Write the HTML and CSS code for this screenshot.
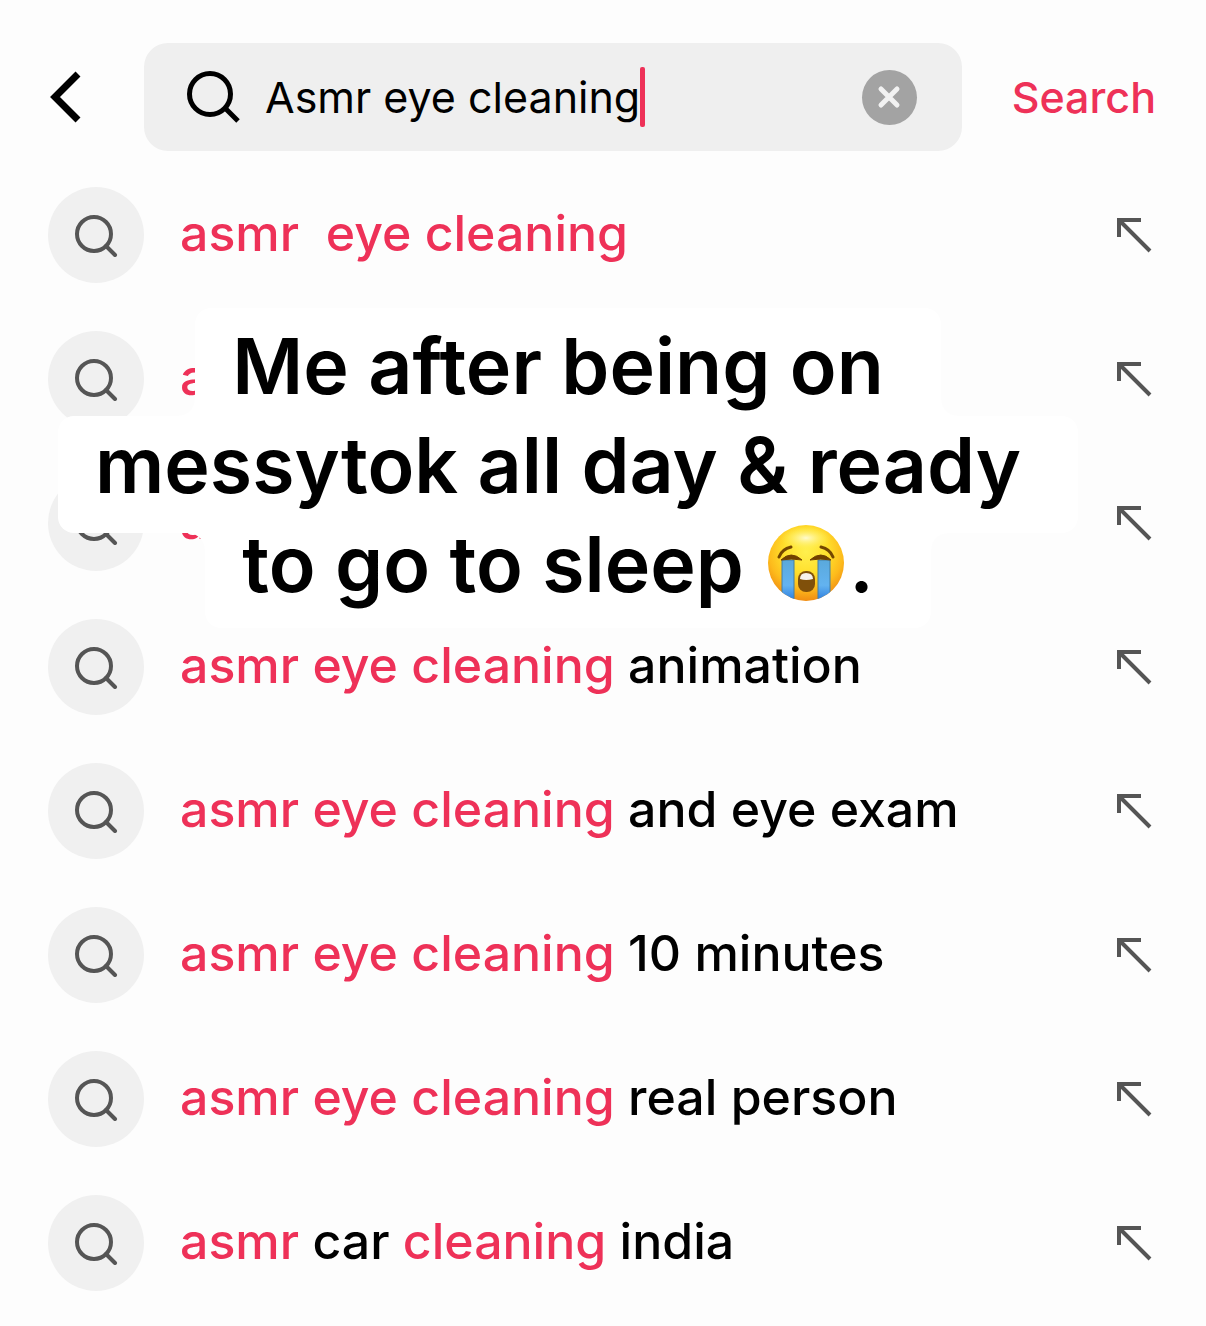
FILE: index.html
```html
<!DOCTYPE html>
<html lang="en">
<head>
    <meta charset="UTF-8">
    <meta name="viewport" content="width=device-width, initial-scale=1.0">
    <title>Search</title>
    <link rel="stylesheet" href="styles.css">
</head>
<body>
    <svg class="sprite" aria-hidden="true">
        <symbol id="icon-search" viewBox="0 0 44 44">
            <circle cx="20" cy="21" r="17" />
            <path d="M32 33 L41 42" stroke-linecap="round" />
        </symbol>
        <symbol id="icon-fill" viewBox="0 0 36 36">
            <path d="M3 20 V3 H25 M3 3 L34 34" />
        </symbol>
    </svg>

    <form class="search-bar" autocomplete="off">
        <button type="button" class="back" aria-label="Back">
            <svg viewBox="0 0 32 54"><path d="M28 4 L5 27 L28 50" /></svg>
        </button>
        <div class="field">
            <svg class="field-icon" viewBox="0 0 54 54"><circle cx="23" cy="24" r="20.5" /><path d="M38 38 L51 51" /></svg>
            <input type="text" id="query" class="query" aria-label="Search" value="Asmr eye cleaning">
            <span class="caret"></span>
            <button type="button" class="clear" aria-label="Clear">
                <svg viewBox="0 0 24 24"><path d="M4 4 L20 20 M20 4 L4 20" /></svg>
            </button>
        </div>
        <button type="submit" class="submit">Search</button>
    </form>

    <main class="results">
        <ul class="suggestions">
            <li class="suggestion">
                <span class="badge"><svg><use href="#icon-search" /></svg></span>
                <a href="#" class="term"><mark>asmr&nbsp; eye cleaning</mark></a>
                <button type="button" class="fill" aria-label="Use suggestion"><svg><use href="#icon-fill" /></svg></button>
            </li>
            <li class="suggestion">
                <span class="badge"><svg><use href="#icon-search" /></svg></span>
                <a href="#" class="term"><mark>asmr</mark></a>
                <button type="button" class="fill" aria-label="Use suggestion"><svg><use href="#icon-fill" /></svg></button>
            </li>
            <li class="suggestion">
                <span class="badge"><svg><use href="#icon-search" /></svg></span>
                <a href="#" class="term"><mark>asmr</mark></a>
                <button type="button" class="fill" aria-label="Use suggestion"><svg><use href="#icon-fill" /></svg></button>
            </li>
            <li class="suggestion">
                <span class="badge"><svg><use href="#icon-search" /></svg></span>
                <a href="#" class="term"><mark>asmr eye cleaning</mark> animation</a>
                <button type="button" class="fill" aria-label="Use suggestion"><svg><use href="#icon-fill" /></svg></button>
            </li>
            <li class="suggestion">
                <span class="badge"><svg><use href="#icon-search" /></svg></span>
                <a href="#" class="term"><mark>asmr eye cleaning</mark> and eye exam</a>
                <button type="button" class="fill" aria-label="Use suggestion"><svg><use href="#icon-fill" /></svg></button>
            </li>
            <li class="suggestion">
                <span class="badge"><svg><use href="#icon-search" /></svg></span>
                <a href="#" class="term"><mark>asmr eye cleaning</mark> 10 minutes</a>
                <button type="button" class="fill" aria-label="Use suggestion"><svg><use href="#icon-fill" /></svg></button>
            </li>
            <li class="suggestion">
                <span class="badge"><svg><use href="#icon-search" /></svg></span>
                <a href="#" class="term"><mark>asmr eye cleaning</mark> real person</a>
                <button type="button" class="fill" aria-label="Use suggestion"><svg><use href="#icon-fill" /></svg></button>
            </li>
            <li class="suggestion">
                <span class="badge"><svg><use href="#icon-search" /></svg></span>
                <a href="#" class="term"><mark>asmr</mark> car <mark>cleaning</mark> india</a>
                <button type="button" class="fill" aria-label="Use suggestion"><svg><use href="#icon-fill" /></svg></button>
            </li>
        </ul>

        <p class="caption">
            <span class="line line-first">Me after being on</span>
            <span class="line line-middle">messytok all day &amp; ready</span>
            <span class="line line-last">to go to sleep
                <svg class="emoji" viewBox="0 0 78 78" role="img" aria-label="Loudly crying face">
                    <defs>
                        <radialGradient id="face" cx="0.5" cy="0.35" r="0.65">
                            <stop offset="0" stop-color="#fff04e" />
                            <stop offset="0.45" stop-color="#ffdf2c" />
                            <stop offset="0.75" stop-color="#fdbb1c" />
                            <stop offset="1" stop-color="#f08c12" />
                        </radialGradient>
                        <radialGradient id="shine">
                            <stop offset="0" stop-color="#fffbd0" />
                            <stop offset="1" stop-color="#fff04e" stop-opacity="0" />
                        </radialGradient>
                        <linearGradient id="tears" x1="0" y1="0" x2="0" y2="1">
                            <stop offset="0" stop-color="#5aa9dc" />
                            <stop offset="0.6" stop-color="#63b3f0" />
                            <stop offset="1" stop-color="#2878dc" />
                        </linearGradient>
                        <clipPath id="face-clip"><circle cx="39" cy="39" r="38" /></clipPath>
                    </defs>
                    <circle cx="39" cy="39" r="38" fill="url(#face)" />
                    <ellipse cx="39" cy="14" rx="26" ry="12" fill="url(#shine)" />
                    <g clip-path="url(#face-clip)">
                        <path d="M15 36 H27 V78 H15 Z M51 36 H63 V78 H51 Z" fill="url(#tears)" stroke="#477fa0" stroke-width="1" />
                    </g>
                    <path d="M12 33 Q15 25 24 23 M54 23 Q63 25 66 33" fill="none" stroke="#744600" stroke-width="3" stroke-linecap="round" />
                    <path d="M14 36 Q24 26 35 36 Q24 34 14 36 Z M43 36 Q54 26 64 36 Q54 34 43 36 Z" fill="#704000" stroke="#704000" stroke-width="1" stroke-linejoin="round" />
                    <rect x="31" y="47" width="17" height="21" rx="8" fill="#80500a" />
                    <path d="M33 55 Q33 49 39 49 Q46 49 46 55 Q39 57 33 55 Z" fill="#f6f2ec" />
                </svg>.</span>
        </p>
    </main>
</body>
</html>
```

FILE: styles.css
```css
* {
    box-sizing: border-box;
}
body {
    min-height: 100vh;
    margin: 0;
    background: #fdfdfd;
    color: #000;
    font-family: Inter, 'Liberation Sans', sans-serif;
}
button {
    display: flex;
    align-items: center;
    justify-content: center;
    flex: none;
    padding: 0;
    border: none;
    background: none;
    font-family: inherit;
    cursor: pointer;
}
svg {
    display: block;
    fill: none;
    stroke: currentColor;
}
.sprite {
    position: absolute;
    width: 0;
    height: 0;
}

/* search bar */
.search-bar {
    display: flex;
    align-items: center;
    padding: 43px 50px 0 50px;
}
.back svg {
    width: 32px;
    height: 54px;
    stroke-width: 7px;
}
.field {
    display: flex;
    align-items: center;
    flex: 1;
    min-width: 0;
    height: 108px;
    margin: 0 50px 0 62px;
    padding: 0 45px 0 43px;
    border-radius: 24px;
    background: #efefef;
}
.field-icon {
    flex: none;
    width: 54px;
    height: 54px;
    margin-right: 24px;
    stroke-width: 5px;
}
.query {
    field-sizing: content;
    min-width: 0;
    padding: 0;
    border: none;
    outline: none;
    background: none;
    color: #000;
    font-family: inherit;
    font-size: 43px;
}
.caret {
    flex: none;
    width: 5px;
    height: 60px;
    border-radius: 2px;
    background: #ee3158;
}
.clear {
    width: 55px;
    height: 55px;
    margin-left: auto;
    border-radius: 50%;
    background: #a3a3a3;
    color: #f2f2f2;
}
.clear svg {
    width: 24px;
    height: 24px;
    stroke-width: 5px;
    stroke-linecap: round;
}
.submit {
    color: #ee3158;
    font-size: 43px;
    font-weight: 500;
}

/* suggestions */
.results {
    position: relative;
    padding-top: 36px;
}
.suggestions {
    display: flex;
    flex-direction: column;
    gap: 48px;
    margin: 0;
    padding: 0 54px 36px 48px;
    list-style: none;
}
.suggestion {
    display: flex;
    align-items: center;
    gap: 36px;
}
.badge {
    display: flex;
    align-items: center;
    justify-content: center;
    flex: none;
    width: 96px;
    height: 96px;
    border-radius: 50%;
    background: #f0f0f0;
    color: #555;
}
.badge svg {
    width: 44px;
    height: 44px;
    stroke-width: 4px;
}
.term {
    flex: 1;
    min-width: 0;
    padding-bottom: 4px;
    color: #000;
    font-size: 50px;
    font-weight: 500;
    line-height: 60px;
    text-decoration: none;
    white-space: nowrap;
}
.term mark {
    background: none;
    color: #ee3158;
}
.fill {
    color: #555;
}
.fill svg {
    width: 36px;
    height: 36px;
    stroke-width: 4px;
}

/* caption laid over the list */
.caption {
    position: absolute;
    top: 157px;
    left: 0;
    right: 70px;
    display: flex;
    flex-direction: column;
    align-items: center;
    margin: 0;
    font-size: 77px;
    font-weight: 600;
    line-height: 99px;
}
.line {
    position: relative;
    padding: 0 57px 0 37px;
    background: #fff;
    white-space: nowrap;
}
.line-first {
    padding-top: 9px;
    border-radius: 16px 16px 0 0;
}
.line-middle {
    margin-bottom: -18px;
    padding-bottom: 18px;
    border-radius: 16px;
}
.line-last {
    padding-bottom: 14px;
    border-radius: 0 0 16px 16px;
}
/* inner corners where a short line meets the wide one */
.line-first::before,
.line-first::after,
.line-last::before,
.line-last::after {
    content: "";
    position: absolute;
    width: 16px;
    height: 16px;
}
.line-first::before,
.line-last::before {
    right: 100%;
}
.line-first::after,
.line-last::after {
    left: 100%;
}
.line-first::before,
.line-first::after {
    bottom: 0;
}
.line-last::before,
.line-last::after {
    top: 18px;
}
.line-first::before {
    background: radial-gradient(circle at 0 0, transparent 15px, #fff 16px);
}
.line-first::after {
    background: radial-gradient(circle at 100% 0, transparent 15px, #fff 16px);
}
.line-last::before {
    background: radial-gradient(circle at 0 100%, transparent 15px, #fff 16px);
}
.line-last::after {
    background: radial-gradient(circle at 100% 100%, transparent 15px, #fff 16px);
}
.emoji {
    display: inline-block;
    width: 78px;
    height: 78px;
    margin: 0 4px;
    vertical-align: -10px;
    stroke: none;
}
```
